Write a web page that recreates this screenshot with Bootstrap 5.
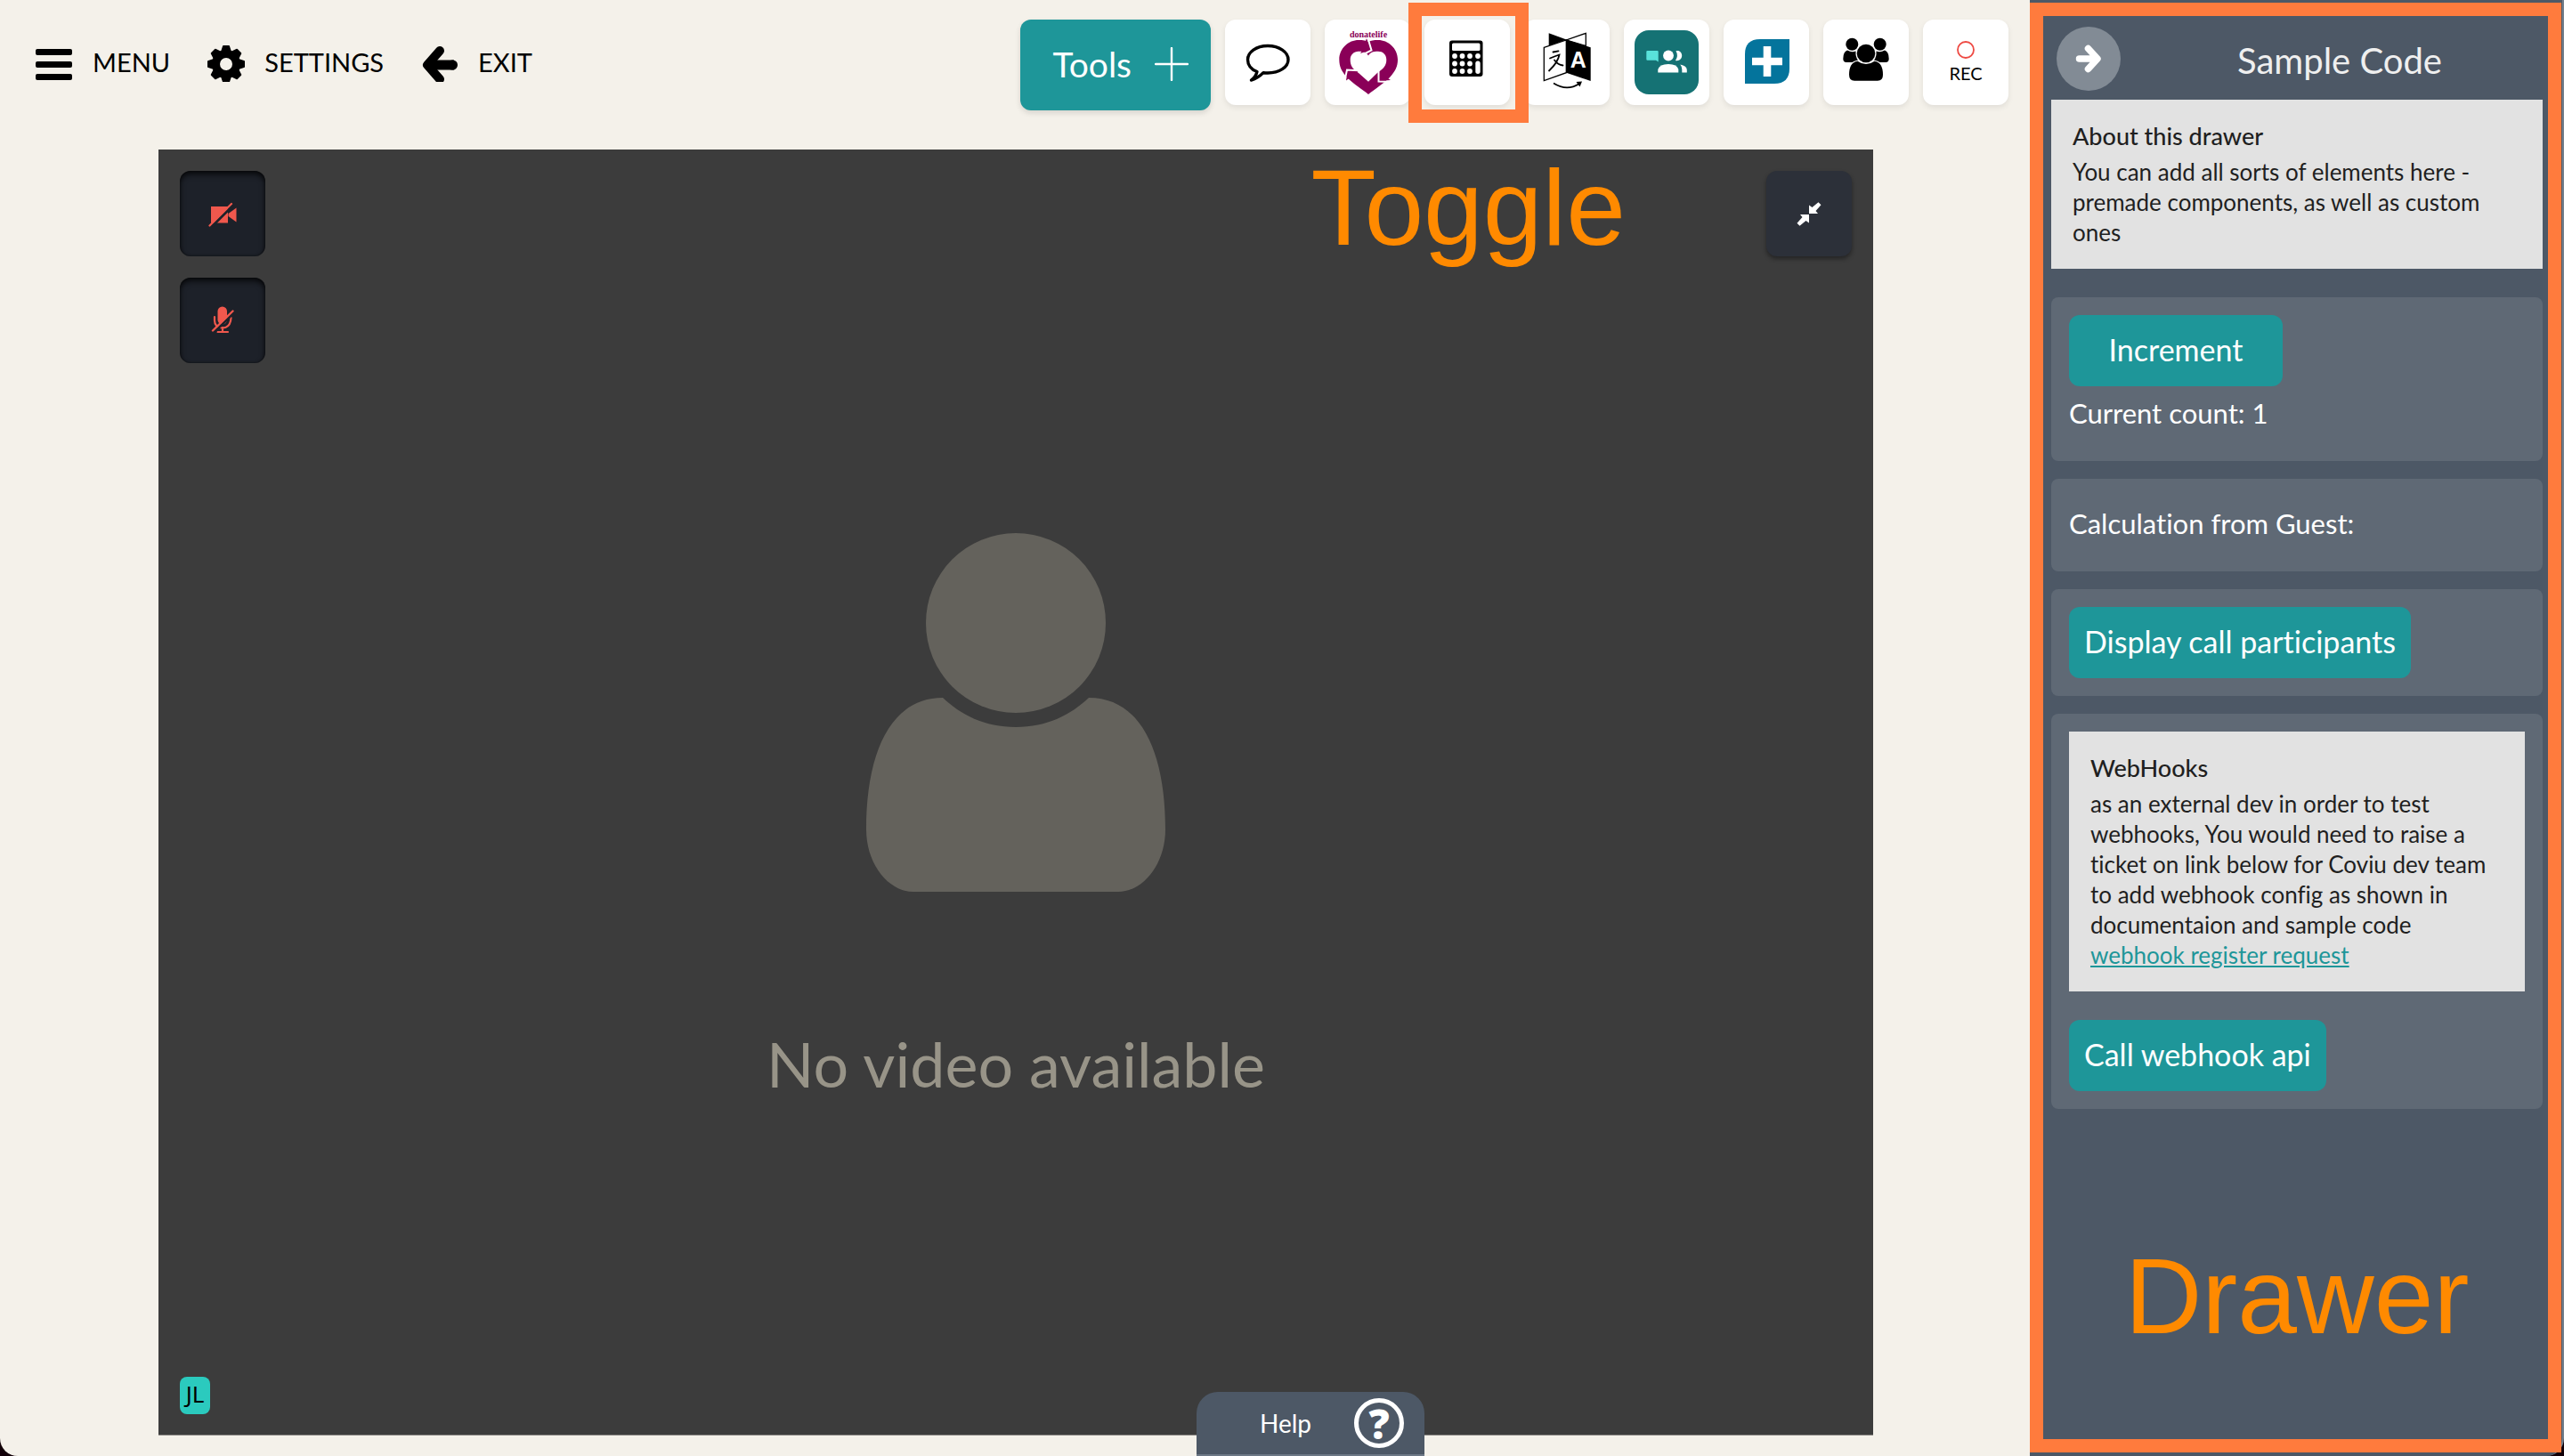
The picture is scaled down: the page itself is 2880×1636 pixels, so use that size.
<!DOCTYPE html>
<html lang="en">
<head>
<meta charset="utf-8">
<meta name="viewport" content="width=device-width, initial-scale=1">
<title>Video call</title>
<link href="https://cdn.jsdelivr.net/npm/bootstrap@5.3.0/dist/css/bootstrap.min.css" rel="stylesheet">
<style>
  :root { --teal: #1e9699; --slate: #4d5866; --mark-line: #ff7b3d; --mark-text: #ff8a00; }
  body { background: #120008; color: #000; font-family: Lato, "Open Sans", sans-serif; font-variant-ligatures: none; }
  button { font-family: inherit; font-variant-ligatures: none; }
  svg { display: block; flex: none; }

  .call-pane { background: #f4f1ea; border-bottom-left-radius: 20px; min-width: 0; }
  .topbar { padding: 22px 24px 0 40px; height: 168px; }
  .main-menu { gap: 42px; height: 96px; }
  .menu-btn { gap: 22px; font-size: 29px; line-height: 36px; color: #000; background: none; border: 0; padding: 0; }
  .toolbar-row { gap: 16px; }
  .tools-btn { height: 102px; padding: 0 25px 2px 36px; gap: 26px; border: 0; border-radius: 12px; background: var(--teal); color: #fff; font-size: 39px; box-shadow: 0 3px 6px rgba(0,0,0,.12); }
  .tile { width: 96px; height: 96px; border: 0; padding: 0; border-radius: 12px; background: #fff; box-shadow: 0 3px 6px rgba(0,0,0,.08); }
  .toggle-frame { inset: -19px -21px -20px -18px; border: 15px solid var(--mark-line); z-index: 3; pointer-events: none; }

  .stage { background: #3c3c3c; margin: 0 176px 23px 178px; border-bottom: 1px solid #8c8985; padding-top: 56px; gap: 150px; }
  .stage-msg { color: #989488; font-size: 70px; line-height: 84px; }
  .stage-left { top: 24px; left: 24px; gap: 24px; }
  .stage-right { top: 24px; right: 24px; }
  .ctl { width: 96px; height: 96px; padding: 0; border: 0; border-radius: 12px; }
  .ctl-off { background: #1d2129; box-shadow: inset 0 4px 6px rgba(0,0,0,.7), inset 0 0 3px rgba(0,0,0,.6); }
  .ctl-on { background: #2c3039; box-shadow: 0 3px 5px rgba(0,0,0,.4); }
  .initials { left: 24px; bottom: 23px; width: 34px; height: 42px; border-radius: 8px; background: #2bcabe; font: 26px/38px "Noto Sans", sans-serif; text-align: center; }
  .mark-text { color: var(--mark-text); font: 120px/120px "Liberation Sans", Arial, sans-serif; }
  .mark-toggle { top: 5px; right: 278px; }
  .mark-drawer { margin-top: 150px; }
  .help-tab { left: 50%; bottom: 0; margin-left: 204px; width: 256px; height: 72px; gap: 48px; padding: 0 23px 0 0; border: 0; border-bottom: 2px solid #6d7886; border-radius: 24px 24px 0 0; background: var(--slate); color: #fff; font-size: 28px; }
  .help-mark { width: 56px; height: 56px; border: 5px solid #fff; border-radius: 50%; font: 800 46px/46px "Open Sans", sans-serif; text-align: center; }

  .drawer { width: 600px; background: var(--slate); color: #fff; border-bottom-right-radius: 20px; border-right: 2px solid #75808c; }
  .drawer-frame { inset: 3px 1px 4px 0; border: 15px solid var(--mark-line); pointer-events: none; }
  .drawer-head { padding: 30px 4px 10px 30px; }
  .drawer-title { color: #efefef; font-size: 40px; line-height: 48px; }
  .close-btn { width: 72px; height: 72px; padding: 0; border: 0; background: #828b95; }
  .drawer-body { padding: 0 22px 0 24px; }
  .note { background: #e2e2e2; color: #1f1f1f; padding: 24px; margin-bottom: 32px; font-size: 26px; line-height: 34px; }
  .note h2 { font-size: 27px; line-height: 34px; font-weight: 500; margin: 0 0 6px; }
  .note a { color: var(--teal); }
  .stack { gap: 20px; }
  .block { background: #5f6975; border-radius: 8px; padding: 20px; }
  .block-label { font-size: 31px; line-height: 60px; padding-bottom: 4px; }
  .act-btn { height: 80px; border: 0; border-radius: 12px; padding: 0 17px 3px; background: var(--teal); color: #fff; font-size: 34px; }
  .act-wide { min-width: 240px; }
</style>
</head>
<body class="d-flex vh-100 overflow-hidden">

<main class="call-pane d-flex flex-column flex-grow-1 position-relative">
  <header class="topbar d-flex justify-content-between align-items-start">
    <nav class="main-menu d-flex align-items-center" aria-label="Call menu">
      <button type="button" class="menu-btn d-flex align-items-center">
        <svg width="42" height="44" viewBox="0 0 42 44" aria-hidden="true"><rect y="7" width="41" height="7" rx="2"/><rect y="21" width="41" height="7" rx="2"/><rect y="35" width="41" height="7" rx="2"/></svg>
        MENU
      </button>
      <button type="button" class="menu-btn d-flex align-items-center">
        <svg width="42" height="44" viewBox="-21 -24 42 44" aria-hidden="true">
          <path fill-rule="evenodd" d="M-16 0a16 16 0 1 0 32 0a16 16 0 1 0-32 0zM-7 0a7 7 0 1 1 14 0a7 7 0 1 1-14 0z"/>
          <g id="teeth"><path id="tooth" d="M-6-14L-4-20Q-4-21-3-21H3Q4-21 4-20L6-14z"/><use href="#tooth" transform="rotate(90)"/><use href="#tooth" transform="rotate(180)"/><use href="#tooth" transform="rotate(270)"/></g>
          <use href="#teeth" transform="rotate(45)"/>
        </svg>
        SETTINGS
      </button>
      <button type="button" class="menu-btn d-flex align-items-center">
        <svg width="42" height="44" viewBox="0 0 42 44" fill="none" stroke="#000" stroke-width="10" stroke-linecap="round" stroke-linejoin="round" aria-hidden="true"><path d="M21 9L7 25L21 41M9 25H28"/><path d="M12 25H37" stroke-width="11" stroke-linecap="butt"/><path d="M35 25h.5" stroke-width="11"/></svg>
        EXIT
      </button>
    </nav>

    <div class="toolbar-row d-flex align-items-start">
      <button type="button" class="tools-btn d-flex align-items-center">Tools
        <svg width="38" height="38" viewBox="0 0 38 38" stroke="#fff" stroke-width="2.4" stroke-linecap="round" aria-hidden="true"><path d="M19 1V37M1 19H37"/></svg>
      </button>

      <button type="button" class="tile" aria-label="Chat">
        <svg width="96" height="96" viewBox="0 0 96 96" fill="none" stroke="#000" stroke-width="3.4" stroke-linejoin="round" aria-hidden="true"><path d="M36 58.500C29 56 25.500 50.500 25.500 45C25.500 36.500 35 29.500 48 29.500S71 36.500 71 45S61 60 48 60Q45.500 60 43 59.700Q37 66 29.500 68Q35 63.500 36 58.500z"/></svg>
      </button>

      <button type="button" class="tile" aria-label="DonateLife">
        <svg width="96" height="96" viewBox="0 0 96 96" aria-hidden="true">
          <text x="49" y="19.500" font-family="Liberation Serif, serif" font-size="10" font-weight="700" text-anchor="middle" fill="#8a0058">donatelife</text>
          <path fill="#8a0058" fill-rule="evenodd" d="M49 84C43 79 32 72 25 65C19 58 16.300 53 16.300 45C16.300 32 27 23 38 23C43 23 46.500 23.500 49 25C52 23.500 55 23 60 23C71 23 82 32 82 45C82 53 79 58 73 65C66 72 55 79 49 84zM49 69.700L59 60C66 55 69.300 52 69.300 45C69.300 39 65 35.700 60 35.700C54 35.700 51 37 49 40.500C47 37 44 35.700 39 35.700C33 35.700 28.700 39 28.700 45C28.700 52 31 55 38 60z"/>
          <path fill="#8a0058" d="M47 21L52 34L40 38L43 33zM24 68.500L25.500 57L38 57.500L33 62zM60 57L65 62L74 68L61.500 69z"/>
          <path fill="none" stroke="#fff" stroke-width="2" d="M48.500 21L52.500 34.500L45.500 38M23 66L25 56.500L38 57.200M60.500 55L60.500 69.500L75 70"/>
        </svg>
      </button>

      <div class="position-relative">
        <button type="button" class="tile d-block" aria-label="Toggle sample drawer" aria-pressed="true">
          <svg width="96" height="96" viewBox="0 0 96 96" aria-hidden="true">
            <rect x="28" y="23.500" width="37.500" height="40.500" rx="3"/>
            <g fill="#fff"><rect x="31" y="26.500" width="31.500" height="8.500" rx="1.500"/>
            <circle cx="34" cy="41" r="2.900"/><circle cx="42.500" cy="41" r="2.900"/><circle cx="51" cy="41" r="2.900"/><circle cx="60" cy="41" r="2.900"/>
            <circle cx="34" cy="49.500" r="2.900"/><circle cx="42.500" cy="49.500" r="2.900"/><circle cx="51" cy="49.500" r="2.900"/>
            <circle cx="34" cy="58" r="2.900"/><circle cx="42.500" cy="58" r="2.900"/><circle cx="51" cy="58" r="2.900"/>
            <rect x="57.300" y="46.500" width="5.400" height="14.500" rx="2.700"/></g>
          </svg>
        </button>
        <div class="toggle-frame position-absolute"></div>
      </div>

      <button type="button" class="tile" aria-label="Interpreter">
        <svg width="96" height="96" viewBox="0 0 96 96" aria-hidden="true">
          <path d="M27.700 15.300L47.500 22.500L27.700 29.500z"/>
          <path d="M69.300 15.300L47.500 23L69.300 29.500z" fill="#fff" stroke="#000" stroke-width="1.300"/>
          <path d="M22.300 31.300L47.300 23V59.700L22.300 68.500z" fill="#fff" stroke="#000" stroke-width="1.300"/>
          <path d="M47.300 22.500L74.700 31.300V69L47.300 59.700z"/>
          <path d="M32.500 36.500l6-1.200M29 43.500Q35 41 39.500 39.500Q38 48 28 57.500M34 45.500Q38 51 43.500 51.500" fill="none" stroke="#000" stroke-width="1.800" stroke-linecap="round"/>
          <text x="60.800" y="54" font-family="Liberation Sans, sans-serif" font-size="25" font-weight="700" text-anchor="middle" fill="#fff">A</text>
          <path d="M33 71.500Q48 81 62 72" fill="none" stroke="#000" stroke-width="1.600"/>
          <path d="M58.500 70L65 69.500L62.500 75.500z"/>
        </svg>
      </button>

      <button type="button" class="tile" aria-label="Group session">
        <svg width="96" height="96" viewBox="0 0 96 96" aria-hidden="true">
          <rect x="12" y="12" width="72" height="72" rx="16" fill="#157274"/>
          <path d="M26.500 35H37.500Q38.700 35 38.700 36V47.500L36 45.800H26.500Q25.300 45.800 25.300 44.500V36Q25.300 35 26.500 35z" fill="#59e2da"/>
          <g fill="#fff"><circle cx="50" cy="40.500" r="5.900"/><path d="M38.300 59.500V56Q40 50 50 50T61.300 56V59.500z"/>
          <path d="M58.500 35.200C62.500 34 65.200 37 65.200 40.500S62 47 58 46Q61.500 40.500 58.500 35.200zM63.300 50.500Q70.800 52 70.800 56.500V59.500H65.300V56Q65.300 53 63.300 50.500z"/></g>
        </svg>
      </button>

      <button type="button" class="tile" aria-label="Health service">
        <svg width="96" height="96" viewBox="0 0 96 96" aria-hidden="true">
          <path d="M24 39Q24 22 41 22H74V55Q74 72 57 72H24z" fill="#04749c"/>
          <path d="M44.700 30h8.600v12.700H66v8.600H53.300V64h-8.600V51.300H32v-8.600h12.700z" fill="#fff"/>
        </svg>
      </button>

      <button type="button" class="tile" aria-label="Participants">
        <svg width="96" height="96" viewBox="0 0 96 96" aria-hidden="true">
          <circle cx="32.300" cy="27.700" r="7"/><circle cx="63.700" cy="27.700" r="7"/>
          <path id="side" d="M27 34.500Q32 37.500 36.500 35.500Q36 42 39 45.500Q35 46 32.500 48H26Q22.300 48 22.300 44Q22.300 36 27 34.500z"/>
          <use href="#side" transform="matrix(-1 0 0 1 96 0)"/>
          <circle cx="48" cy="38" r="10.300"/>
          <path d="M38.500 46.700Q48 53.500 57.500 46.700Q67 48 67 62Q67 68.700 61 68.700H35Q29 68.700 29 62Q29 48 38.500 46.700z"/>
        </svg>
      </button>

      <button type="button" class="tile" aria-label="Record">
        <svg width="96" height="96" viewBox="0 0 96 96" aria-hidden="true"><circle cx="48" cy="34" r="9" fill="none" stroke="#ee4a43" stroke-width="1.800"/><text x="48" y="68" font-family="Lato, sans-serif" font-size="20" text-anchor="middle">REC</text></svg>
      </button>
    </div>
  </header>

  <section class="stage position-relative d-flex flex-column align-items-center justify-content-center flex-grow-1">
    <svg width="338" height="404" viewBox="0 0 338 404" fill="#64625c" aria-hidden="true">
      <circle cx="169" cy="101" r="101"/>
      <path d="M87 185C107 204 134 218 169 218S231 204 251 185C310 185 337 247 337 333C337 372 312 403 284 403H54C26 403 1 372 1 333C1 247 28 185 87 185z"/>
    </svg>
    <div class="stage-msg">No video available</div>

    <div class="stage-left position-absolute d-flex flex-column">
      <button type="button" class="ctl ctl-off" aria-label="Turn camera on">
        <svg width="96" height="96" viewBox="0 0 96 96" aria-hidden="true">
          <g fill="#f0584d"><path d="M35 40H54V58.500H35z"/><path d="M54.500 48L63.500 41.500V57.500L54.500 51z"/></g>
          <path d="M36.500 62L60 38.500" stroke="#1d2129" stroke-width="3"/><path d="M33.500 61.500L58 37" stroke="#f0584d" stroke-width="2.200" stroke-linecap="round"/>
        </svg>
      </button>
      <button type="button" class="ctl ctl-off" aria-label="Unmute microphone">
        <svg width="96" height="96" viewBox="0 0 96 96" aria-hidden="true">
          <rect x="42.500" y="32.500" width="10.500" height="20" rx="5.200" fill="#f0584d"/>
          <path d="M39 44V48Q39 56 48 56.500Q57 56 57.500 45M48 56V61M42.500 61H54" fill="none" stroke="#f0584d" stroke-width="2.200" stroke-linecap="round"/>
          <path d="M39 61L60 40" stroke="#1d2129" stroke-width="3"/><path d="M37 59.500L59.500 37.500" stroke="#f0584d" stroke-width="2.400" stroke-linecap="round"/>
        </svg>
      </button>
    </div>
    <div class="stage-right position-absolute">
      <button type="button" class="ctl ctl-on" aria-label="Exit full size">
        <svg width="96" height="96" viewBox="0 0 96 96" fill="#fff" aria-hidden="true"><path id="dart" d="M48 48V38.500L51.500 41L58.500 35.200L61.500 38.200L55.500 45L58 48z"/><use href="#dart" transform="rotate(180 48 48.500)"/></svg>
      </button>
    </div>
    <div class="initials position-absolute">JL</div>
    <div class="mark-text mark-toggle position-absolute">Toggle</div>
  </section>

  <button type="button" class="help-tab position-absolute d-flex align-items-center justify-content-end">Help
    <span class="help-mark">?</span>
  </button>
</main>

<aside class="drawer d-flex flex-column flex-shrink-0 position-relative" aria-label="Sample Code">
  <div class="drawer-head d-flex align-items-center">
    <button type="button" class="close-btn rounded-circle d-flex align-items-center justify-content-center" aria-label="Close drawer">
      <svg width="32" height="34" viewBox="0 0 32 34" fill="none" stroke="#fff" stroke-width="7.500" stroke-linecap="round" stroke-linejoin="round" aria-hidden="true"><path d="M15.500 5.500L26 17L15.500 28.500M5.500 17H24"/></svg>
    </button>
    <h1 class="drawer-title flex-grow-1 text-center fw-normal mb-0 pt-1">Sample Code</h1>
  </div>
  <div class="drawer-body">
    <div class="note">
      <h2>About this drawer</h2>
      <p class="mb-0">You can add all sorts of elements here - premade components, as well as custom ones</p>
    </div>
    <div class="stack d-flex flex-column">
      <div class="block">
        <button type="button" class="act-btn act-wide d-block">Increment</button>
        <div class="block-label">Current count: 1</div>
      </div>
      <div class="block"><div class="block-label">Calculation from Guest:</div></div>
      <div class="block"><button type="button" class="act-btn d-block">Display call participants</button></div>
      <div class="block">
        <div class="note">
          <h2>WebHooks</h2>
          <p class="mb-0">as an external dev in order to test webhooks, You would need to raise a ticket on link below for Coviu dev team to add webhook config as shown in documentaion and sample code <a href="#">webhook register request</a></p>
        </div>
        <button type="button" class="act-btn d-block">Call webhook api</button>
      </div>
    </div>
    <div class="mark-text mark-drawer text-center">Drawer</div>
  </div>
  <div class="drawer-frame position-absolute"></div>
</aside>

<script src="https://cdn.jsdelivr.net/npm/bootstrap@5.3.0/dist/js/bootstrap.bundle.min.js"></script>
</body>
</html>
